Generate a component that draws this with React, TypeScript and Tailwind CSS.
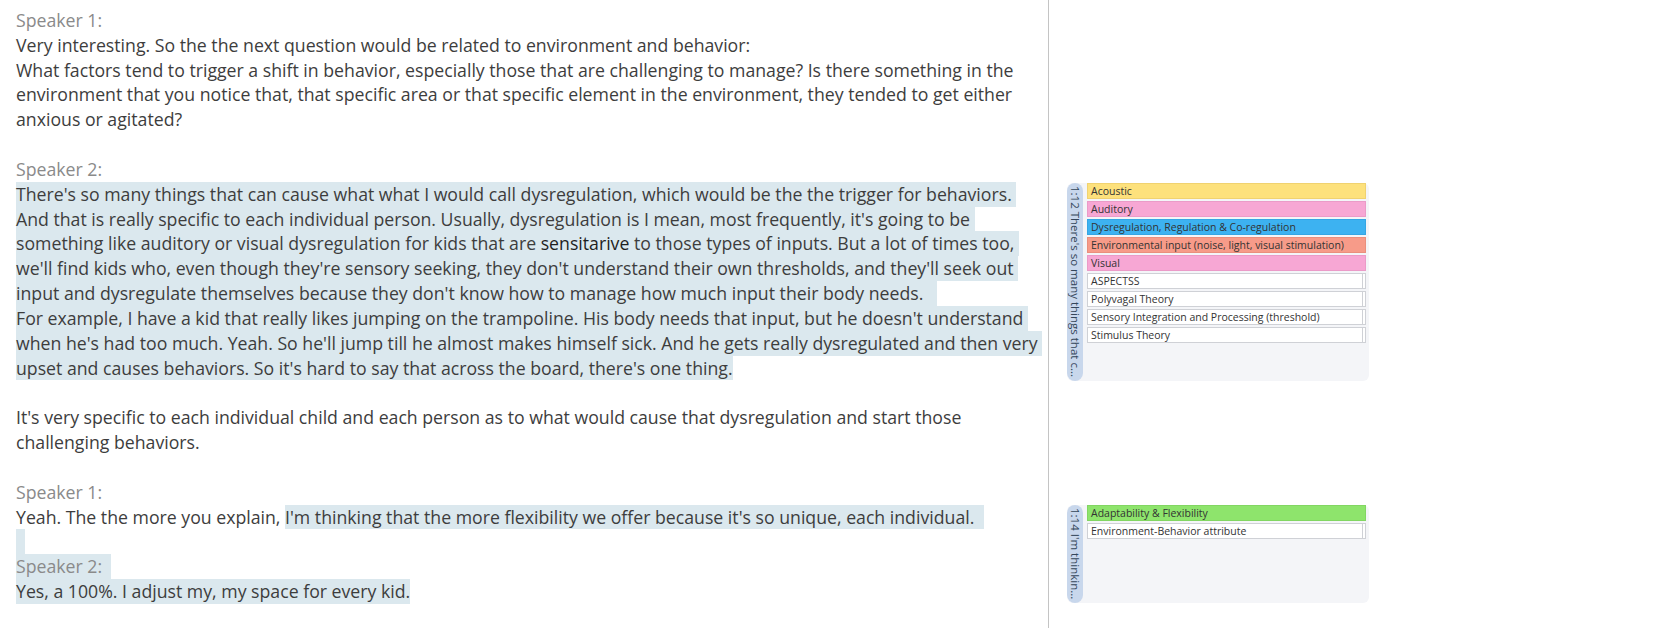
import React from 'react';

type Seg = { text: string; hl?: boolean; dark?: boolean };
type Line = { segs: Seg[]; label?: boolean };

const L = (text: string, hl = false): Line => ({ segs: [{ text, hl }] });

const lines: Line[] = [
  { segs: [{ text: 'Speaker 1:' }], label: true },
  L('Very interesting. So the the next question would be related to environment and behavior:'),
  L('What factors tend to trigger a shift in behavior, especially those that are challenging to manage? Is there something in the'),
  L('environment that you notice that, that specific area or that specific element in the environment, they tended to get either'),
  L('anxious or agitated?'),
  L(''),
  { segs: [{ text: 'Speaker 2:' }], label: true },
  L('There\'s so many things that can cause what what I would call dysregulation, which would be the the trigger for behaviors. ', true),
  L('And that is really specific to each individual person. Usually, dysregulation is I mean, most frequently, it\'s going to be ', true),
  {
    segs: [
      { text: 'something like auditory or visual dysregulation for kids that are ', hl: true },
      { text: 'sensitarive', hl: true, dark: true },
      { text: ' to those types of inputs. But a lot of times too, ', hl: true },
    ],
  },
  L('we\'ll find kids who, even though they\'re sensory seeking, they don\'t understand their own thresholds, and they\'ll seek out ', true),
  L('input and dysregulate themselves because they don\'t know how to manage how much input their body needs.   ', true),
  L('For example, I have a kid that really likes jumping on the trampoline. His body needs that input, but he doesn\'t understand ', true),
  L('when he\'s had too much. Yeah. So he\'ll jump till he almost makes himself sick. And he gets really dysregulated and then very ', true),
  L('upset and causes behaviors. So it\'s hard to say that across the board, there\'s one thing.', true),
  L(''),
  L('It\'s very specific to each individual child and each person as to what would cause that dysregulation and start those'),
  L('challenging behaviors.'),
  L(''),
  { segs: [{ text: 'Speaker 1:' }], label: true },
  {
    segs: [
      { text: 'Yeah. The the more you explain, ' },
      { text: 'I\'m thinking that the more flexibility we offer because it\'s so unique, each individual.  ', hl: true },
    ],
  },
  { segs: [{ text: '  ', hl: true }] },
  { segs: [{ text: 'Speaker 2:  ', hl: true }], label: true },
  L('Yes, a 100%. I adjust my, my space for every kid.', true),
];

type Code = { name: string; bg?: string };

const firstCodes: Code[] = [
  { name: 'Acoustic', bg: 'bg-[#fde17c] border-[#f0d270]' },
  { name: 'Auditory', bg: 'bg-[#f7a7d4] border-[#eb9bc8]' },
  { name: 'Dysregulation, Regulation & Co-regulation', bg: 'bg-[#3db2f1] border-[#35a6e4]' },
  { name: 'Environmental input (noise, light, visual stimulation)', bg: 'bg-[#f79b89] border-[#ea8f7d]' },
  { name: 'Visual', bg: 'bg-[#f7a7d4] border-[#eb9bc8]' },
  { name: 'ASPECTSS' },
  { name: 'Polyvagal Theory' },
  { name: 'Sensory Integration and Processing (threshold)' },
  { name: 'Stimulus Theory' },
];

const secondCodes: Code[] = [
  { name: 'Adaptability & Flexibility', bg: 'bg-[#8ee46c] border-[#82d662]' },
  { name: 'Environment-Behavior attribute' },
];

const CodeRow: React.FC<{ code: Code }> = ({ code }) =>
  code.bg ? (
    <div className={`h-4 border ${code.bg} pl-[3px] text-[10.5px] leading-[14px] text-[#333] whitespace-nowrap overflow-hidden`}>
      {code.name}
    </div>
  ) : (
    <div className="h-4 border border-[#cfd1d6] bg-white flex text-[10.5px] leading-[14px] text-[#333]">
      <div className="flex-1 pl-[3px] whitespace-nowrap overflow-hidden">{code.name}</div>
      <div className="w-[3px] border-l border-[#cfd1d6]" />
    </div>
  );

const CodePanel: React.FC<{ label: string; codes: Code[]; height: string; className?: string }> = ({
  label,
  codes,
  height,
  className,
}) => (
  <div className={`flex w-[302px] ${height} bg-[#f4f5f8] rounded-md ${className ?? ''}`}>
    <div className="w-4 h-full rounded-lg bg-[#c8d7ec] flex justify-center pt-[3px]">
      <span className="[writing-mode:vertical-rl] text-[11.5px] leading-4 text-[#34465a] whitespace-nowrap">
        {label}
      </span>
    </div>
    <div className="flex-1 flex flex-col gap-[2px] pl-1 pr-[3px]">
      {codes.map((c) => (
        <CodeRow key={c.name} code={c} />
      ))}
    </div>
  </div>
);

export default function App() {
  return (
    <div
      className="flex h-[628px] w-[1680px] bg-white overflow-hidden"
      style={{ fontFamily: '"Open Sans", "Noto Sans", sans-serif' }}
    >
      <div className="w-[1048px] pl-4 pt-2 text-[17.7px] text-[#3d3d3d]">
        {lines.map((line, i) => (
          <div key={i} className={`h-[24.83px] leading-[24.83px] whitespace-pre ${line.label ? 'text-[#8a8a8a]' : ''}`}>
            {line.segs.map((s, j) =>
              s.hl ? (
                <span key={j} className={`inline-block h-[24.83px] align-top bg-[#dbe8ee] ${s.dark ? 'text-[#1f1f1f]' : ''}`}>
                  {s.text}
                </span>
              ) : (
                <span key={j}>{s.text || '\u00a0'}</span>
              ),
            )}
          </div>
        ))}
      </div>
      <div className="w-px h-full bg-[#c4c4c4]" />
      <div className="flex-1 pl-[18px] flex flex-col">
        <CodePanel label="1:12 There's so many things that c..." codes={firstCodes} height="h-[198px]" className="mt-[183px]" />
        <CodePanel label="1:14 I'm thinkin..." codes={secondCodes} height="h-[98px]" className="mt-[124px]" />
      </div>
    </div>
  );
}
